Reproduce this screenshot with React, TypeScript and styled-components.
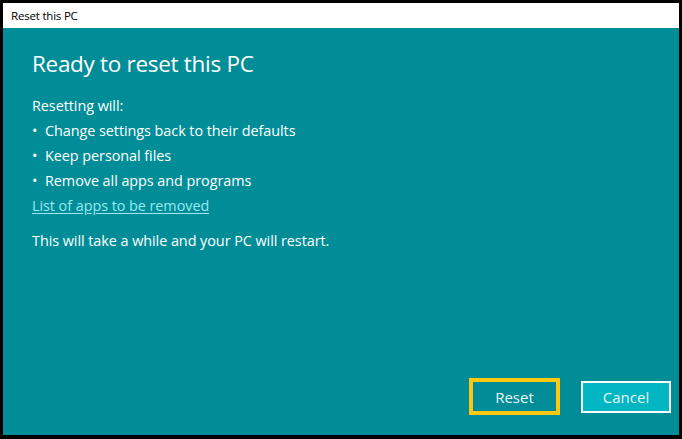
import React from "react";
import styled, { createGlobalStyle } from "styled-components";

const Global = createGlobalStyle`
  html, body { margin: 0; padding: 0; background: #000; }
  body { width: 682px; height: 439px; overflow: hidden; }
  * { box-sizing: border-box; }
`;

const Frame = styled.div`
  width: 682px;
  height: 439px;
  padding: 3px 3px 4px 3px;
  background: #000;
`;

const Window = styled.div`
  width: 676px;
  height: 432px;
  display: flex;
  flex-direction: column;
  background: #018d98;
  font-family: "Open Sans", "Noto Sans", sans-serif;
  color: #ffffff;
`;

const TitleBar = styled.div`
  height: 25px;
  background: #ffffff;
  color: #000;
  font-size: 11.5px;
  padding-left: 8px;
  display: flex;
  align-items: center;
  letter-spacing: -0.2px;
`;

const Content = styled.div`
  flex: 1;
  padding: 20px 0 0 29px;
  display: flex;
  flex-direction: column;
`;

const Heading = styled.h1`
  margin: 0 0 13px 0;
  font-size: 22.5px;
  font-weight: 400;
  line-height: 32px;
  letter-spacing: -0.3px;
`;

const Line = styled.div<{ $gapTop?: number }>`
  font-size: 14.4px;
  line-height: 25px;
  letter-spacing: -0.05px;
  margin-top: ${(p) => p.$gapTop ?? 0}px;
  display: flex;
`;

const Bullet = styled.span`
  width: 13px;
  flex: none;
`;

const Link = styled.a`
  font-size: 14.4px;
  line-height: 25px;
  letter-spacing: -0.05px;
  color: #99e8f2;
  text-decoration: underline;
  text-underline-offset: 2px;
  align-self: flex-start;
  cursor: pointer;
`;

const Footer = styled.div`
  display: flex;
  justify-content: flex-end;
  align-items: center;
  gap: 21px;
  padding: 0 8px 20px 0;
`;

const Button = styled.button<{ $focused?: boolean }>`
  font-family: "Open Sans", "Noto Sans", sans-serif;
  font-size: 15px;
  color: #eaf8f9;
  cursor: pointer;
  padding: 0;
  ${(p) =>
    p.$focused
      ? `
    width: 91px;
    height: 37px;
    border: 4px solid #fdc80d;
    background: #018d98;
  `
      : `
    width: 90px;
    height: 32px;
    border: 2px solid #ffffff;
    background: #00b6c3;
  `}
`;

export default function App() {
  return (
    <>
      <Global />
      <Frame>
        <Window>
          <TitleBar>Reset this PC</TitleBar>
          <Content>
            <Heading>Ready to reset this PC</Heading>
            <Line>Resetting will:</Line>
            <Line>
              <Bullet>•</Bullet>Change settings back to their defaults
            </Line>
            <Line>
              <Bullet>•</Bullet>Keep personal files
            </Line>
            <Line>
              <Bullet>•</Bullet>Remove all apps and programs
            </Line>
            <Link>List of apps to be removed</Link>
            <Line $gapTop={10}>This will take a while and your PC will restart.</Line>
          </Content>
          <Footer>
            <Button $focused>Reset</Button>
            <Button>Cancel</Button>
          </Footer>
        </Window>
      </Frame>
    </>
  );
}
